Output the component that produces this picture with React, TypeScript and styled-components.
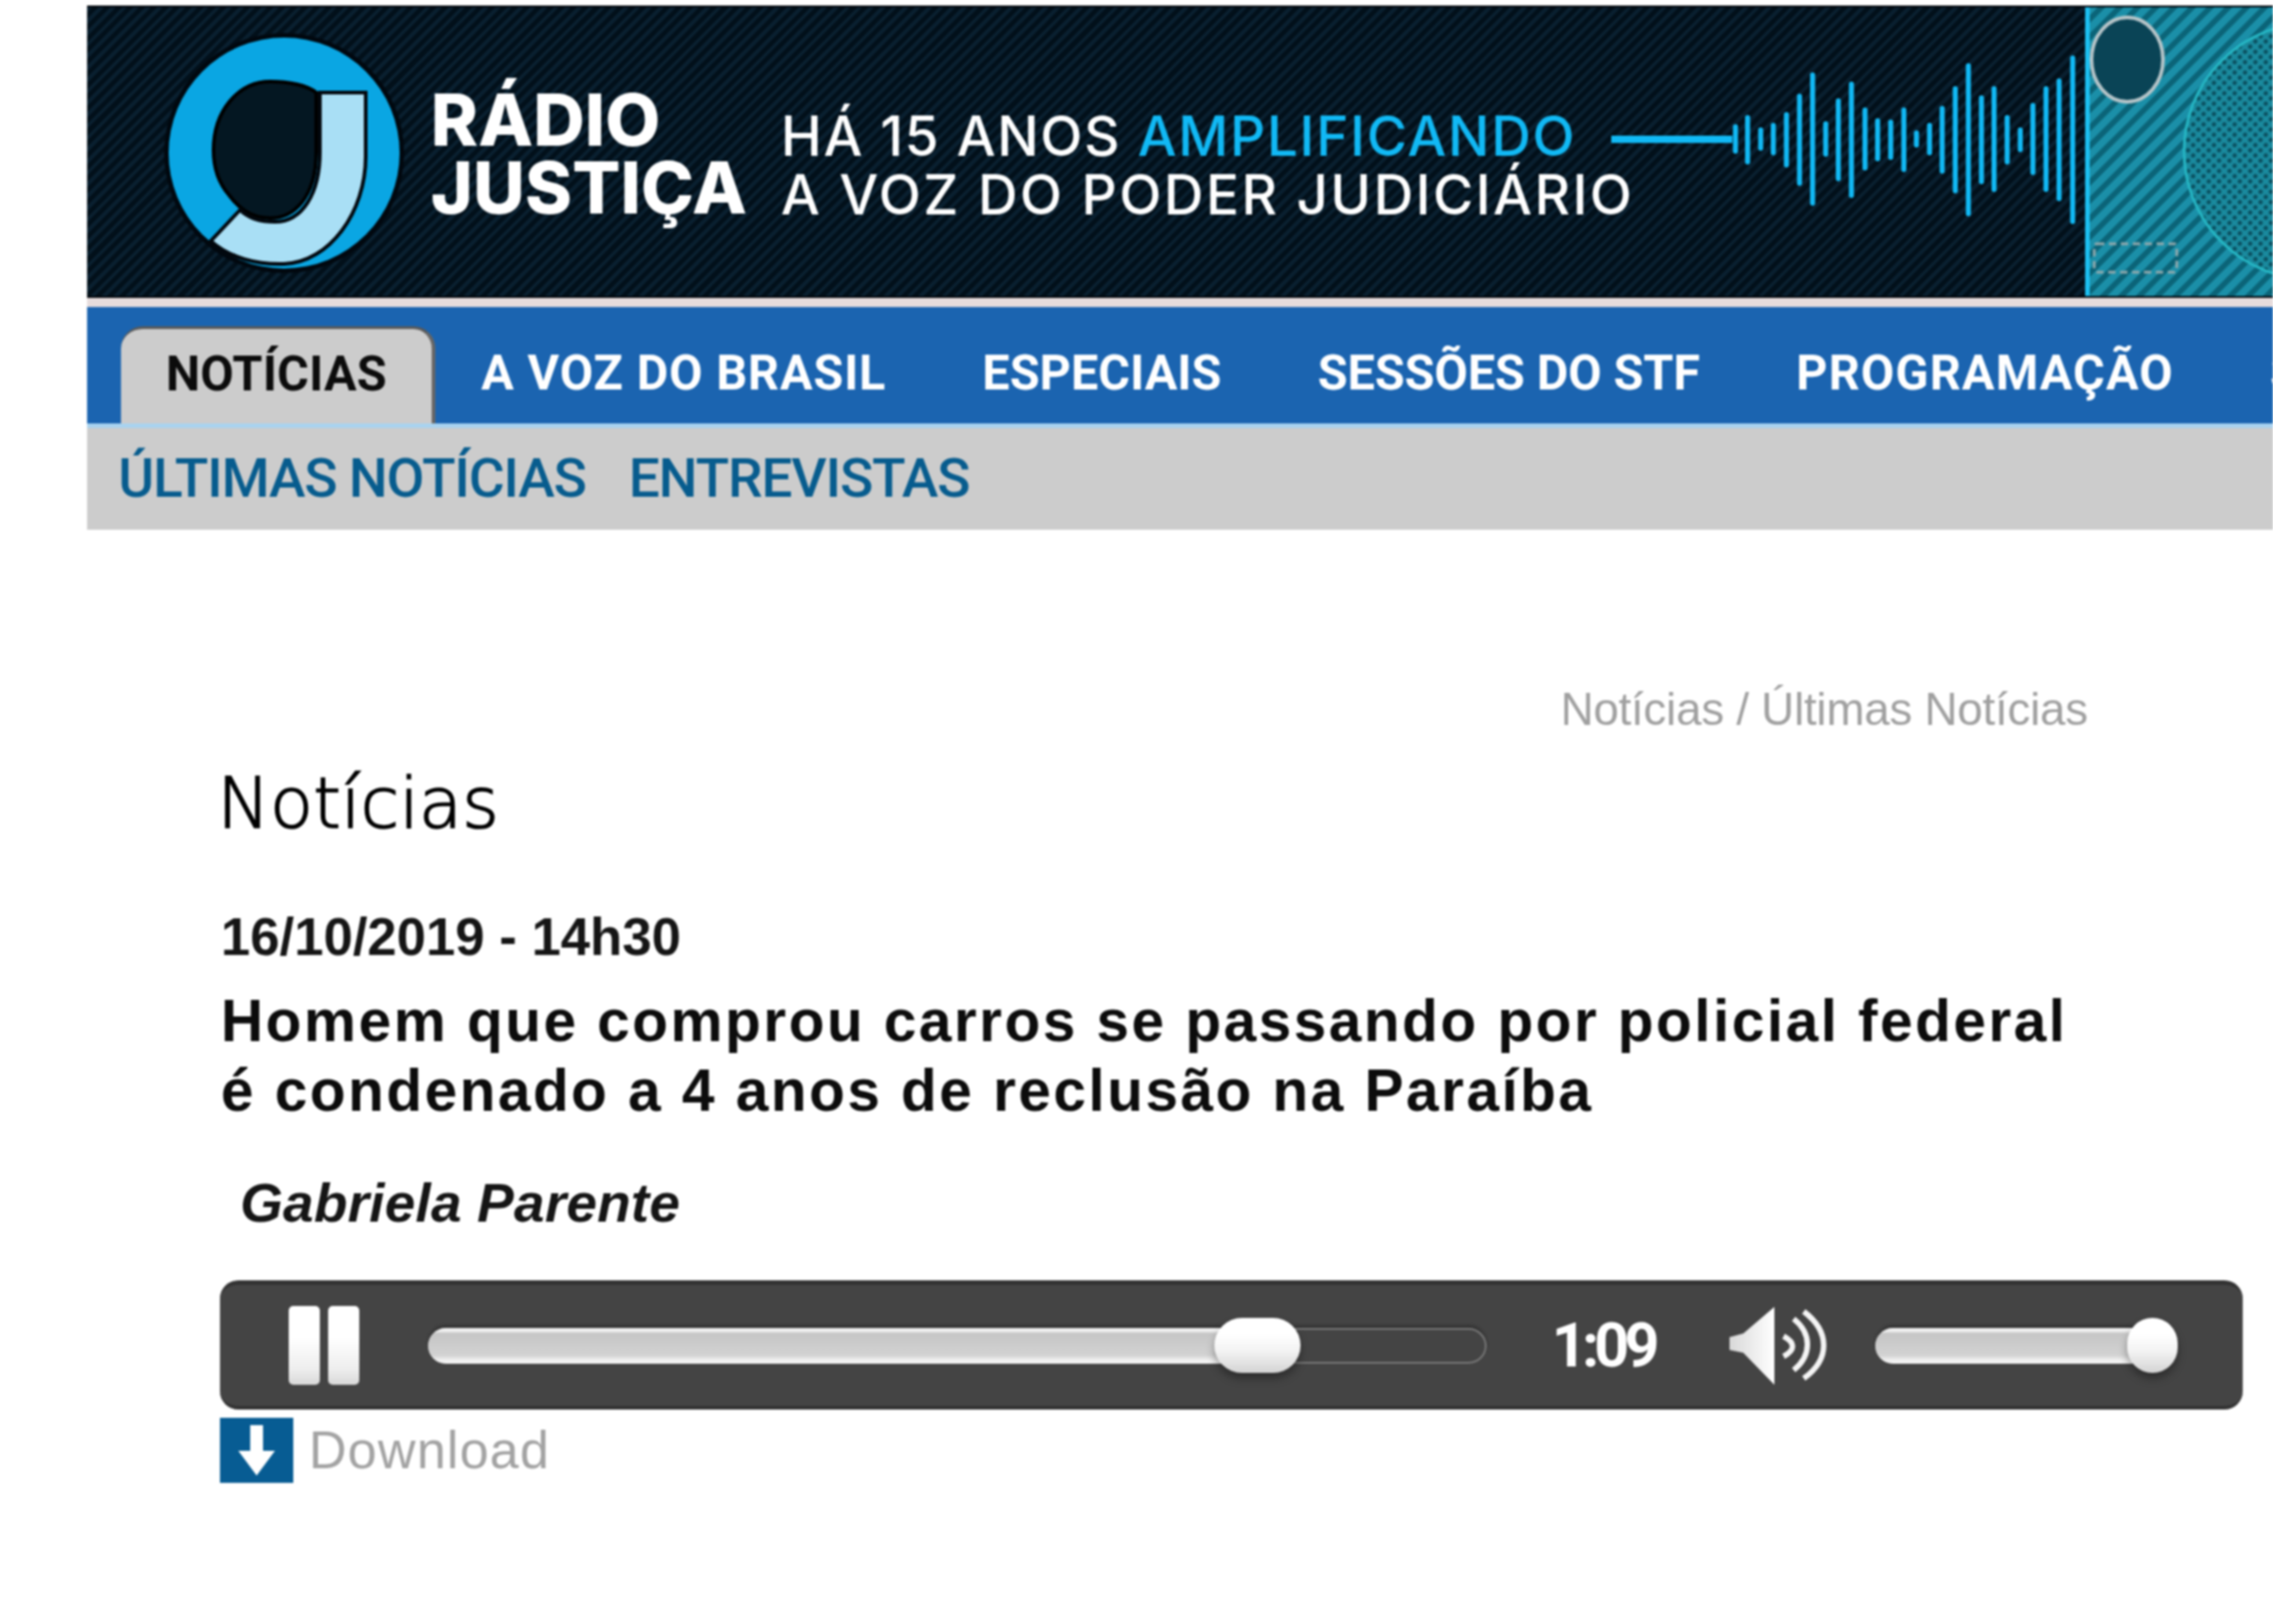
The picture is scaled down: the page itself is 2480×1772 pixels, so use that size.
import React from "react";
import styled, { createGlobalStyle } from "styled-components";

const Global = createGlobalStyle`
  html, body { margin: 0; padding: 0; background: #fff; }
`;

const Page = styled.div`
  width: 2480px;
  height: 1772px;
  overflow: hidden;
  background: #fff;
  padding: 6px 0 0 95px;
  box-sizing: border-box;
  font-family: "Liberation Sans", Arial, sans-serif;
  filter: blur(0.9px);
`;

const Frame = styled.div`
  width: 2385px;
`;

const Banner = styled.header`
  height: 319px;
  display: flex;
  align-items: flex-start;
  padding-left: 80px;
  box-sizing: border-box;
  border-top: 2px solid #01060c;
  border-bottom: 2px solid #01060c;
  background: repeating-linear-gradient(135deg, #0a2030 0 4px, #02101a 4px 9px);
  overflow: hidden;
`;

const LogoMark = styled.svg`
  flex: 0 0 270px;
  height: 270px;
  margin-top: 23px;
`;

const Brand = styled.div`
  flex: 0 0 382px;
  min-width: 0;
  margin: 86px 0 0 25px;
  font-family: Inter, sans-serif;
  font-weight: 800;
  font-size: 78px;
  line-height: 74px;
  color: #fff;
  white-space: nowrap;
`;

const Slogan = styled.div`
  flex: 0 0 906px;
  min-width: 0;
  margin-top: 108px;
  font-family: Inter, sans-serif;
  font-weight: 500;
  font-size: 60px;
  line-height: 64px;
  color: #fff;
  white-space: nowrap;
`;

const SloganLine = styled.div<{ $track: number }>`
  letter-spacing: ${(p) => p.$track}px;
`;

const Accent = styled.span`
  color: #11b9f5;
`;

const WaveArt = styled.svg`
  flex: 0 0 517px;
  height: 315px;
`;

const RadioArt = styled.svg`
  flex: 0 0 205px;
  height: 315px;
`;

const Strip = styled.div`
  height: 10px;
  background: #e6dcdc;
`;

const Nav = styled.nav`
  height: 127px;
  display: flex;
  align-items: flex-end;
  padding-left: 37px;
  background: #1b64b0;
  border-bottom: 5px solid #a9d3ef;
  overflow: hidden;
`;

const NavItem = styled.a<{ $active?: boolean; $track?: number }>`
  flex: none;
  height: 106px;
  display: flex;
  align-items: center;
  box-sizing: border-box;
  padding: ${(p) => (p.$active ? "0 49px 0 49px" : "0 52.5px")};
  padding-bottom: 5px;
  margin-right: ${(p) => (p.$active ? "-2.5px" : "0")};
  font-family: Roboto, sans-serif;
  font-weight: 700;
  font-size: 53px;
  letter-spacing: ${(p) => p.$track ?? 0.2}px;
  white-space: nowrap;
  color: ${(p) => (p.$active ? "#0c0c0c" : "#fff")};
  background: ${(p) => (p.$active ? "#cccccc" : "transparent")};
  border-radius: ${(p) => (p.$active ? "24px 24px 0 0" : "0")};
  border-top: ${(p) => (p.$active ? "3px solid #5a5a5a" : "0")};
  border-right: ${(p) => (p.$active ? "4px solid #666" : "0")};
`;

const SubNav = styled.div`
  height: 111px;
  display: flex;
  align-items: center;
  gap: 47px;
  padding: 0 0 2px 34px;
  box-sizing: border-box;
  background: #cccccc;
`;

const SubLink = styled.a`
  font-family: Roboto, sans-serif;
  font-weight: 500;
  font-size: 60px;
  letter-spacing: -1.3px;
  color: #075c8e;
  white-space: nowrap;
`;

const Content = styled.main`
  width: 2207px;
  margin-left: 145px;
`;

const Crumbs = styled.div`
  margin-top: 161px;
  padding-right: 169px;
  text-align: right;
  font-size: 50px;
  line-height: 70px;
  letter-spacing: -0.3px;
  color: #a0a0a0;
`;

const Title = styled.h1`
  margin: 23px 0 0 -3px;
  font-family: "DejaVu Sans", sans-serif;
  font-weight: 200;
  font-size: 77px;
  line-height: 90px;
  color: #000;
  -webkit-text-stroke: 1.6px #000;
`;

const DateLine = styled.div`
  margin: 65px 0 0 1px;
  font-weight: 700;
  font-size: 57.5px;
  line-height: 70px;
  color: #151515;
`;

const Headline = styled.h2`
  margin: 19px 0 0 1px;
  font-weight: 700;
  font-size: 64px;
  line-height: 76px;
  letter-spacing: 2.65px;
  color: #0c0c0c;
`;

const Author = styled.div`
  margin: 47px 0 0 22px;
  font-style: italic;
  font-weight: 700;
  font-size: 60px;
  line-height: 76px;
  letter-spacing: 0.2px;
  color: #151515;
`;

const Player = styled.div`
  height: 141px;
  margin-top: 46px;
  display: flex;
  align-items: center;
  padding-left: 75px;
  box-sizing: border-box;
  background: #444;
  border-radius: 20px;
  border-top: 5px solid #333;
  border-bottom: 4px solid #333;
`;

const Pause = styled.div`
  flex: 0 0 77px;
  height: 86px;
  display: flex;
  justify-content: space-between;
`;

const PauseBar = styled.span`
  width: 34px;
  border-radius: 5px;
  background: linear-gradient(#fff 40%, #eee 80%, #d8d8d8);
`;

const Track = styled.div<{ $w: number; $ml: number }>`
  position: relative;
  flex: 0 0 ${(p) => p.$w}px;
  margin-left: ${(p) => p.$ml}px;
  height: 39px;
  box-sizing: border-box;
  border: 2px solid #777;
  border-radius: 20px;
  box-shadow: 0 -3px 3px #333;
`;

const Fill = styled.div`
  position: absolute;
  left: -2px;
  top: -2px;
  bottom: -2px;
  border-radius: 20px 0 0 20px;
  background: linear-gradient(#f0f0f0 0, #f0f0f0 8%, #c6c6c6 16%, #d2d2d2 76%, #f0f0f0 90%, #f5f5f5);
`;

const Thumb = styled.div`
  position: absolute;
  top: -13px;
  height: 60px;
  border-radius: 30px;
  background: linear-gradient(#fff 30%, #f3f3f3 60%, #d4d4d4);
  box-shadow: 0 6px 10px rgba(0, 0, 0, 0.35);
`;

const Time = styled.div`
  flex: 0 0 113px;
  margin-left: 71px;
  font-family: Roboto, sans-serif;
  font-weight: 700;
  font-size: 67px;
  line-height: 60px;
  letter-spacing: -5.5px;
  color: #fff;
  white-space: nowrap;
`;

const Speaker = styled.svg`
  flex: 0 0 107px;
  height: 85px;
  margin-left: 81px;
`;

const DownloadRow = styled.a`
  display: flex;
  align-items: center;
  gap: 17px;
  margin-top: 9px;
  font-size: 57px;
  line-height: 71px;
  letter-spacing: 1.2px;
  color: #a3a3a3;
`;

const DownloadIcon = styled.svg`
  flex: 0 0 80px;
  height: 71px;
`;

const bars: [number, number, number][] = [
  [460, 415, 495], [485, 385, 530], [512, 425, 485], [538, 410, 500], [565, 375, 540],
  [592, 315, 600], [619, 245, 665], [646, 405, 505], [672, 330, 585], [699, 275, 640],
  [727, 360, 550], [753, 395, 520], [780, 400, 515], [807, 360, 555], [833, 435, 475],
  [860, 410, 500], [886, 355, 560], [913, 290, 625], [940, 215, 700], [967, 320, 595],
  [993, 290, 620], [1020, 385, 530], [1047, 425, 490], [1073, 345, 565], [1100, 290, 620],
  [1127, 265, 650], [1155, 190, 725],
];

const navItems: { label: string; track: number }[] = [
  { label: "A VOZ DO BRASIL", track: 0.87 },
  { label: "ESPECIAIS", track: 0 },
  { label: "SESSÕES DO STF", track: -0.1 },
  { label: "PROGRAMAÇÃO", track: 1.2 },
  { label: "SOBRE", track: 0.2 },
];

export default function App() {
  return (
    <>
      <Global />
      <Page>
        <Frame>
          <Banner>
            <LogoMark viewBox="175 30 270 270">
              <circle cx="310" cy="166" r="131" fill="#01080f" />
              <circle cx="310" cy="166" r="126" fill="#0aa6e3" />
              <path d="M345 100V165C345 215 320 237 295 237C275 237 262 228 250 212C238 198 233 180 233 163C233 120 260 88 295 88C315 88 335 92 345 100Z" fill="#041722" stroke="#000" strokeWidth="4" />
              <path d="M349 100H399V170C399 230 360 285 310 287C280 288 250 280 230 262L262 228C272 238 285 241 300 241C330 241 349 210 349 165Z" fill="#a9dff5" stroke="#02080e" strokeWidth="4" />
            </LogoMark>
            <Brand>
              RÁDIO
              <br />
              JUSTIÇA
            </Brand>
            <Slogan>
              <SloganLine $track={1.75}>
                HÁ 15 ANOS <Accent>AMPLIFICANDO</Accent>
              </SloganLine>
              <SloganLine $track={2.6}>A VOZ DO PODER JUDICIÁRIO</SloganLine>
            </Slogan>
            <WaveArt viewBox="1758 8 517 315">
              <rect x="1758" y="148" width="132" height="8" fill="#11b9f5" />
              {bars.map(([x, a, b]) => (
                <line
                  key={x}
                  x1={1650 + x / 1.889}
                  x2={1650 + x / 1.889}
                  y1={a / 3}
                  y2={b / 3}
                  stroke="#11b9f5"
                  strokeWidth="5.5"
                  strokeLinecap="round"
                />
              ))}
            </WaveArt>
            <RadioArt viewBox="2275 8 205 315">
              <defs>
                <pattern id="teal" width="14" height="14" patternUnits="userSpaceOnUse" patternTransform="rotate(-45)">
                  <rect width="14" height="14" fill="#1b8fa8" />
                  <rect width="14" height="6" fill="#0b6478" />
                </pattern>
                <pattern id="dots" width="8" height="8" patternUnits="userSpaceOnUse" patternTransform="rotate(45)">
                  <rect width="8" height="8" fill="#1a8a9e" />
                  <circle cx="4" cy="4" r="2.4" fill="#0a4e5e" />
                </pattern>
              </defs>
              <rect x="2275" y="8" width="205" height="315" fill="url(#teal)" />
              <rect x="2275" y="8" width="5" height="315" fill="#1cc0f2" />
              <ellipse cx="2321" cy="65" rx="39" ry="46" fill="#0a4456" stroke="#b5c4c8" strokeWidth="4" />
              <circle cx="2523" cy="165" r="140" fill="url(#dots)" stroke="#26b6c4" strokeWidth="3" />
              <rect x="2285" y="266" width="90" height="31" rx="3" fill="none" stroke="#8fa8ac" strokeWidth="3" strokeDasharray="8 5" />
            </RadioArt>
          </Banner>
          <Strip />
          <Nav>
            <NavItem $active>NOTÍCIAS</NavItem>
            {navItems.map((n) => (
              <NavItem key={n.label} $track={n.track}>
                {n.label}
              </NavItem>
            ))}
          </Nav>
          <SubNav>
            <SubLink>ÚLTIMAS NOTÍCIAS</SubLink>
            <SubLink>ENTREVISTAS</SubLink>
          </SubNav>
          <Content>
            <Crumbs>Notícias / Últimas Notícias</Crumbs>
            <Title>Notícias</Title>
            <DateLine>16/10/2019 - 14h30</DateLine>
            <Headline>
              Homem que comprou carros se passando por policial federal
              <br />é condenado a 4 anos de reclusão na Paraíba
            </Headline>
            <Author>Gabriela Parente</Author>
            <Player>
              <Pause>
                <PauseBar />
                <PauseBar />
              </Pause>
              <Track $w={1155} $ml={75}>
                <Fill style={{ width: 900 }} />
                <Thumb style={{ left: 856, width: 94 }} />
              </Track>
              <Time>1:09</Time>
              <Speaker viewBox="1885 1423 107 85">
                <defs>
                  <linearGradient id="cone" x1="0" x2="1" y1="0" y2="0">
                    <stop offset="0" stopColor="#d8d8d8" />
                    <stop offset="1" stopColor="#fff" />
                  </linearGradient>
                </defs>
                <path d="M1885 1456L1900 1452L1934 1423V1508L1900 1473L1885 1470Z" fill="url(#cone)" />
                <g fill="none" stroke="#f4f4f4" strokeWidth="6">
                  <path d="M1944 1455C1957 1462 1957 1470 1944 1477" />
                  <path d="M1955 1436C1975 1452 1975 1476 1955 1492" />
                  <path d="M1966 1428C1995 1450 1995 1480 1966 1501" />
                </g>
              </Speaker>
              <Track $w={299} $ml={52}>
                <Fill style={{ width: 299, borderRadius: 20 }} />
                <Thumb style={{ left: 273, width: 55 }} />
              </Track>
            </Player>
            <DownloadRow>
              <DownloadIcon viewBox="0 0 80 71">
                <rect width="80" height="71" fill="#075c93" />
                <path d="M33 8H47V36H60L40 63L20 36H33Z" fill="#fff" />
              </DownloadIcon>
              Download
            </DownloadRow>
          </Content>
        </Frame>
      </Page>
    </>
  );
}
